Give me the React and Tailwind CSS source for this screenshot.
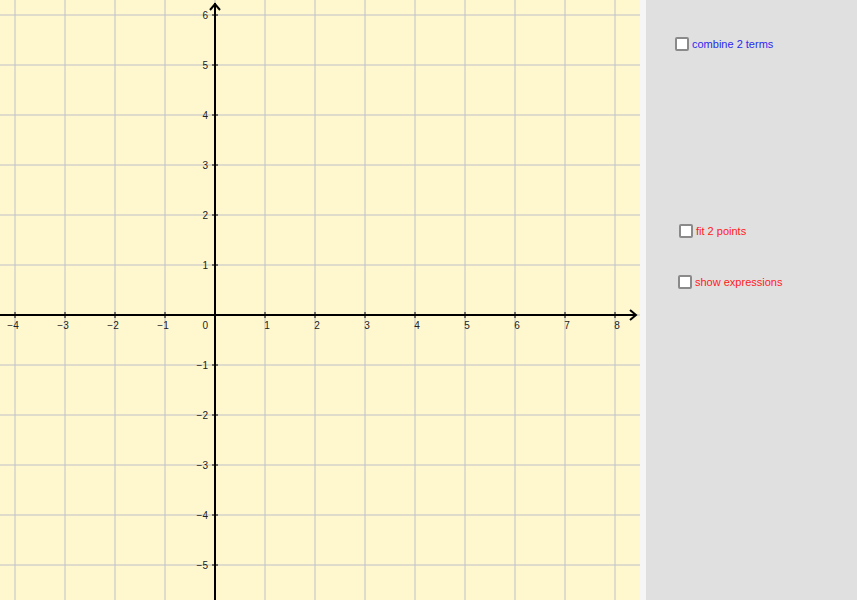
const xs = [-4, -3, -2, -1, 1, 2, 3, 4, 5, 6, 7, 8];
const ys = [-5, -4, -3, -2, -1, 1, 2, 3, 4, 5, 6];

function Graph() {
  const px = (v) => 215 + v * 50;
  const py = (v) => 315 - v * 50;
  return (
    <svg width="640" height="600" className="block" style={{ fontFamily: "Liberation Sans, Arial, sans-serif" }}>
      <rect width="640" height="600" fill="#fff8cf" />
      {Array.from({ length: 13 }, (_, i) => (
        <line key={"v" + i} x1={15 + i * 50} y1="0" x2={15 + i * 50} y2="600" stroke="#c0c0c8" strokeWidth="1" />
      ))}
      {Array.from({ length: 12 }, (_, i) => (
        <line key={"h" + i} x1="0" y1={15 + i * 50} x2="640" y2={15 + i * 50} stroke="#c0c0c8" strokeWidth="1" />
      ))}
      <line x1="0" y1="315" x2="636" y2="315" stroke="#000" strokeWidth="2" />
      <line x1="215" y1="3" x2="215" y2="600" stroke="#000" strokeWidth="2" />
      <path d="M630 310 L636 315 L630 320" fill="none" stroke="#000" strokeWidth="2" />
      <path d="M210 10 L215 4 L220 10" fill="none" stroke="#000" strokeWidth="2" />
      {xs.map((v) => (
        <g key={v}>
          <line x1={px(v)} y1="312" x2={px(v)} y2="318" stroke="#000" />
          <text x={px(v) + (v > 0 ? 2 : -2)} y="329" fontSize="10" textAnchor="middle" fill="#222">
            {v < 0 ? "\u2212" + -v : v}
          </text>
        </g>
      ))}
      {ys.map((v) => (
        <g key={v}>
          <line x1="212" y1={py(v)} x2="218" y2={py(v)} stroke="#000" />
          <text x="208" y={py(v) + 4} fontSize="10" textAnchor="end" fill="#222">
            {v < 0 ? "\u2212" + -v : v}
          </text>
        </g>
      ))}
      <text x="208" y="329" fontSize="10" textAnchor="end" fill="#222">0</text>
    </svg>
  );
}

function Check({ label, color }) {
  return (
    <label className="flex items-center gap-[3px] text-[11px]" style={{ color }}>
      <span className="w-[14px] h-[14px] rounded-[2px] border-2 border-[#8a8a8a] bg-white" />
      {label}
    </label>
  );
}

export default function App() {
  return (
    <div className="flex w-[859px] h-[600px] bg-white overflow-hidden" style={{ fontFamily: "Liberation Sans, Arial, sans-serif" }}>
      <Graph />
      <div className="w-[6px] bg-[#f6f6f6]" />
      <div className="w-[211px] bg-[#e0e0e0] flex flex-col pl-[29px]">
        <div className="mt-[36px]">
          <Check label="combine 2 terms" color="#2a2aee" />
        </div>
        <div className="mt-[170px] pl-[4px]">
          <Check label="fit 2 points" color="#ff1a1a" />
        </div>
        <div className="mt-[35px] pl-[3px]">
          <Check label="show expressions" color="#ff1a1a" />
        </div>
      </div>
    </div>
  );
}
